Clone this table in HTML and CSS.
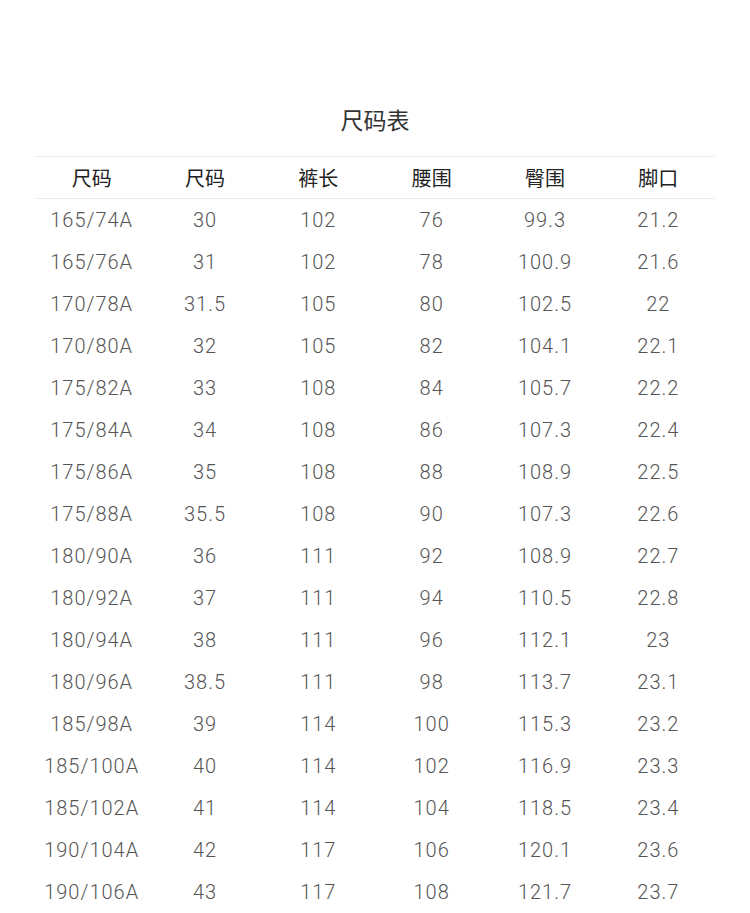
FILE: index.html
```html
<!DOCTYPE html>
<html lang="zh">
<head>
<meta charset="utf-8">
<title>尺码表</title>
<link rel="stylesheet" href="styles.css">
</head>
<body>
<div class="page">
  <h1 class="title">尺码表</h1>
  <table class="size-table">
    <thead>
      <tr><th>尺码</th><th>尺码</th><th>裤长</th><th>腰围</th><th>臀围</th><th>脚口</th></tr>
    </thead>
    <tbody>
      <tr><td>165/74A</td><td>30</td><td>102</td><td>76</td><td>99.3</td><td>21.2</td></tr>
      <tr><td>165/76A</td><td>31</td><td>102</td><td>78</td><td>100.9</td><td>21.6</td></tr>
      <tr><td>170/78A</td><td>31.5</td><td>105</td><td>80</td><td>102.5</td><td>22</td></tr>
      <tr><td>170/80A</td><td>32</td><td>105</td><td>82</td><td>104.1</td><td>22.1</td></tr>
      <tr><td>175/82A</td><td>33</td><td>108</td><td>84</td><td>105.7</td><td>22.2</td></tr>
      <tr><td>175/84A</td><td>34</td><td>108</td><td>86</td><td>107.3</td><td>22.4</td></tr>
      <tr><td>175/86A</td><td>35</td><td>108</td><td>88</td><td>108.9</td><td>22.5</td></tr>
      <tr><td>175/88A</td><td>35.5</td><td>108</td><td>90</td><td>107.3</td><td>22.6</td></tr>
      <tr><td>180/90A</td><td>36</td><td>111</td><td>92</td><td>108.9</td><td>22.7</td></tr>
      <tr><td>180/92A</td><td>37</td><td>111</td><td>94</td><td>110.5</td><td>22.8</td></tr>
      <tr><td>180/94A</td><td>38</td><td>111</td><td>96</td><td>112.1</td><td>23</td></tr>
      <tr><td>180/96A</td><td>38.5</td><td>111</td><td>98</td><td>113.7</td><td>23.1</td></tr>
      <tr><td>185/98A</td><td>39</td><td>114</td><td>100</td><td>115.3</td><td>23.2</td></tr>
      <tr><td>185/100A</td><td>40</td><td>114</td><td>102</td><td>116.9</td><td>23.3</td></tr>
      <tr><td>185/102A</td><td>41</td><td>114</td><td>104</td><td>118.5</td><td>23.4</td></tr>
      <tr><td>190/104A</td><td>42</td><td>117</td><td>106</td><td>120.1</td><td>23.6</td></tr>
      <tr><td>190/106A</td><td>43</td><td>117</td><td>108</td><td>121.7</td><td>23.7</td></tr>
    </tbody>
  </table>
</div>
</body>
</html>
```

FILE: styles.css
```css
html, body {
  margin: 0;
  padding: 0;
  background: #ffffff;
}

.page {
  padding: 102px 35px 0 35px;
}

.title {
  margin: 0 0 20px 0;
  font-family: "Noto Sans CJK SC", "Noto Sans", sans-serif;
  font-weight: 400;
  font-size: 23px;
  line-height: 34px;
  color: #333333;
  text-align: center;
}

.size-table {
  width: 100%;
  border-collapse: collapse;
  table-layout: fixed;
}

.size-table th {
  height: 41px;
  padding: 0;
  border-top: 1px solid #ececec;
  border-bottom: 1px solid #ececec;
  font-family: "Noto Sans CJK SC", "Noto Sans", sans-serif;
  font-weight: 400;
  font-size: 20px;
  line-height: 41px;
  color: #222222;
  text-align: center;
}

.size-table td {
  height: 42px;
  padding: 0;
  font-family: Roboto, "Liberation Sans", sans-serif;
  font-weight: 300;
  font-size: 20px;
  letter-spacing: 1px;
  line-height: 42px;
  color: #555555;
  text-align: center;
}
```
